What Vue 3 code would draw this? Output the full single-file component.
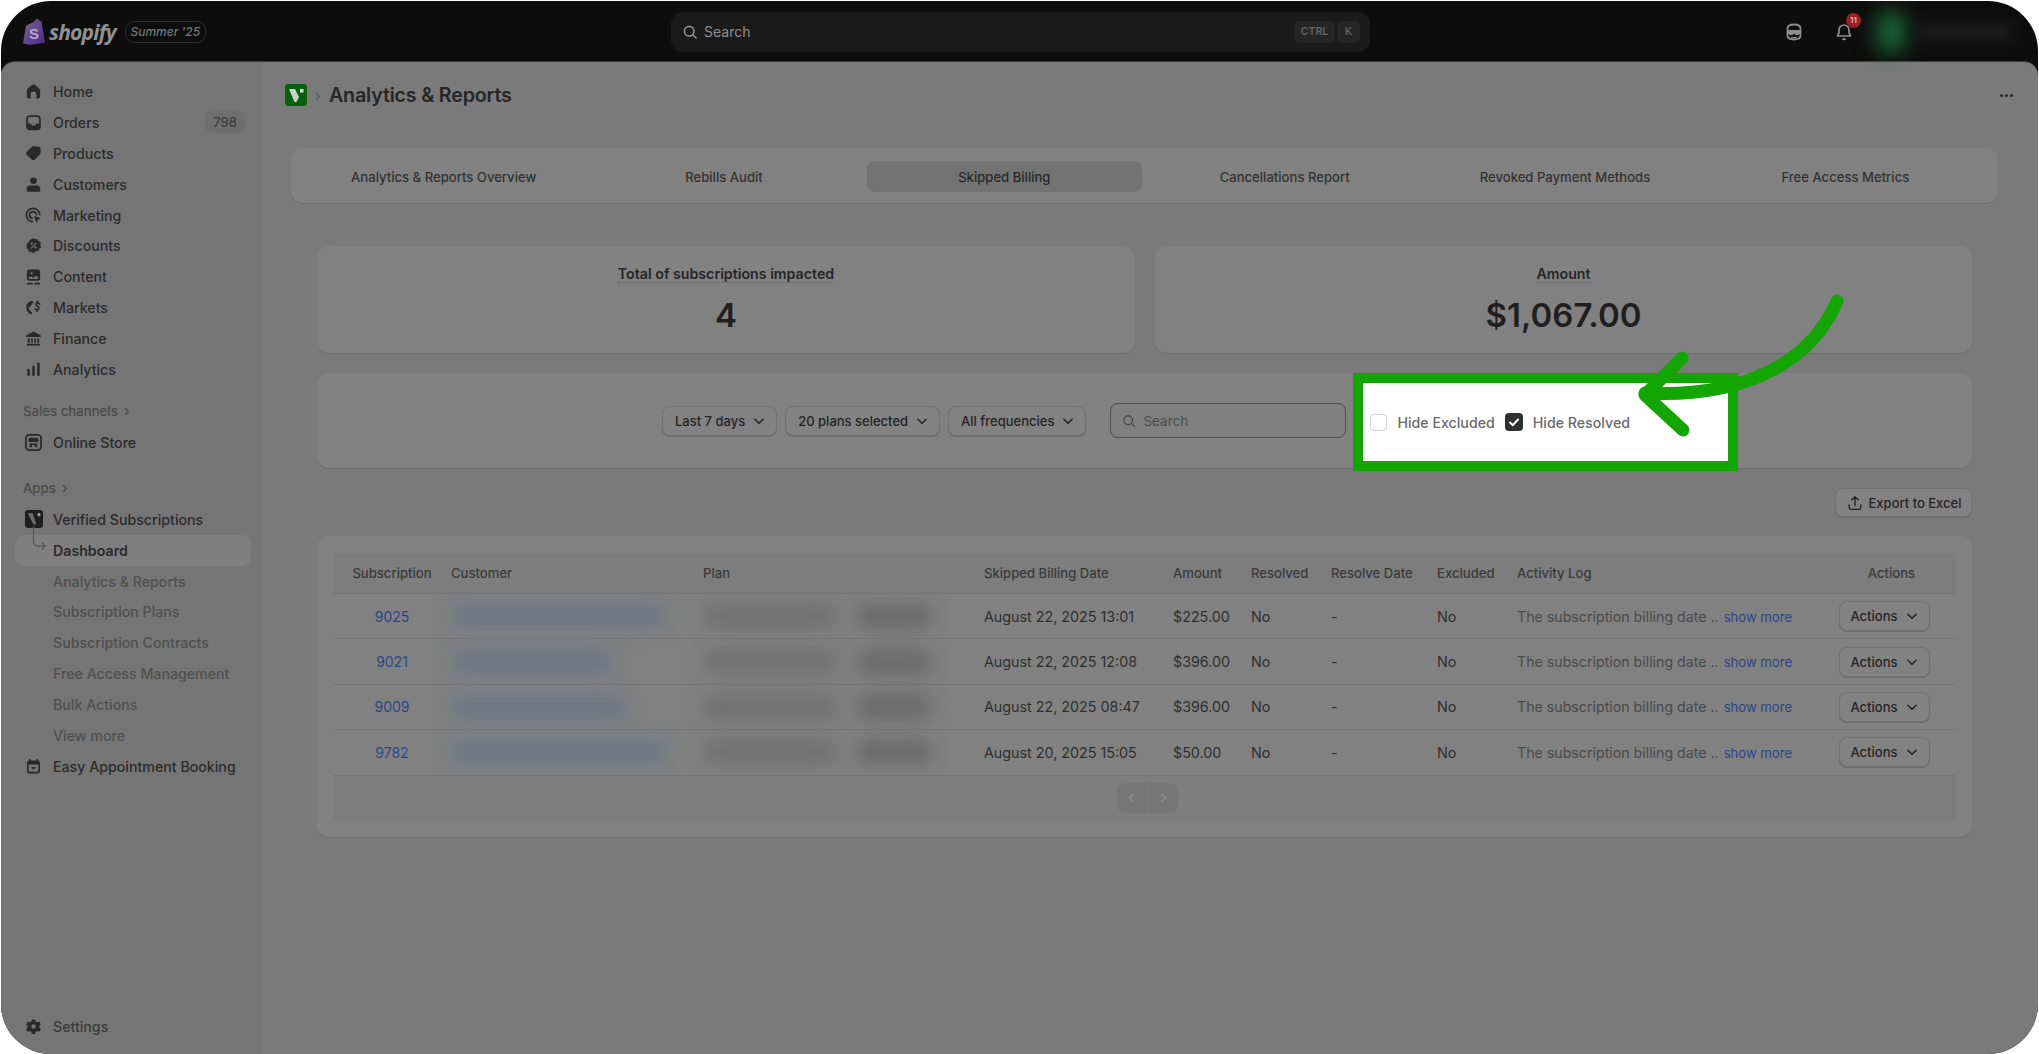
<template>
  <div class="screen">
    <div class="frame">
      <header class="topbar">
        <div class="brand">
          <svg class="bag" viewBox="0 0 22 26">
            <defs>
              <linearGradient id="bagfill" x1="0" y1="0" x2="1" y2="1">
                <stop offset="0" stop-color="#76688a" />
                <stop offset="1" stop-color="#4f2390" />
              </linearGradient>
            </defs>
            <path d="M3 6.500 11 3c.8-1.800 2-3 3.500-3 1 0 1.700.700 2.200 2l1.800.400L22 23.500 7 26 0 24.500Z" fill="url(#bagfill)" />
            <text x="6" y="20" class="bag-s">S</text>
          </svg>
          <span class="wordmark">shopify</span>
          <span class="season">Summer '25</span>
        </div>
        <div class="top-search">
          <svg class="ico16" viewBox="0 0 20 20"><circle cx="9" cy="9" r="6" fill="none" stroke="#909090" stroke-width="2" /><path d="m13.500 13.500 4 4" stroke="#909090" stroke-width="2" stroke-linecap="round" /></svg>
          <span class="top-search-text">Search</span>
          <span class="kbd ctrl">CTRL</span>
          <span class="kbd">K</span>
        </div>
        <div class="top-right">
          <svg class="top-ico" viewBox="0 0 20 20">
            <path d="M10 2.500c4.200 0 6.500 1.200 6.500 4v7c0 2.800-2.300 4-6.500 4s-6.500-1.200-6.500-4v-7c0-2.800 2.300-4 6.500-4Z" fill="none" stroke="#8e8e8e" stroke-width="1.800" />
            <path d="M3.500 8h13v3.500L14 13h-2.500L10 11.500 8.500 13H6l-2.500-1.500ZM7 15h6v1.200H7Z" fill="#8e8e8e" />
          </svg>
          <div class="bell">
            <svg class="top-ico" viewBox="0 0 20 20"><path d="M10 3a5 5 0 0 0-5 5v3l-1.500 3h13L15 11V8a5 5 0 0 0-5-5Z M8.500 16.500a1.700 1.700 0 0 0 3 0" fill="none" stroke="#8e8e8e" stroke-width="1.700" stroke-linejoin="round" /></svg>
            <span class="bell-badge">11</span>
          </div>
          <div class="avatar"></div>
          <div class="account"></div>
        </div>
      </header>

      <div class="content">
        <aside class="sidebar">
          <a v-for="item in primaryNav" :key="item.name" class="nav-row">
            <svg class="nav-ico" viewBox="0 0 20 20">
              <path v-for="d in icons[item.icon].f" :key="d" :d="d" fill="#292929" fill-rule="evenodd" />
              <path v-for="d in icons[item.icon].s" :key="d" :d="d" fill="none" stroke="#292929" stroke-width="1.800" stroke-linecap="round" />
            </svg>
            <span>{{ item.name }}</span>
            <span v-if="item.count" class="count">{{ item.count }}</span>
          </a>

          <div class="nav-label first">Sales channels <span class="label-arrow">›</span></div>
          <a class="nav-row">
            <svg class="nav-ico" viewBox="0 0 20 20">
              <rect x="2" y="2" width="16" height="16" rx="3.500" fill="none" stroke="#292929" stroke-width="1.800" />
              <path d="M5.500 5h9l1 3.500a1.500 1.500 0 0 1-2.800.600 2.200 2.200 0 0 1-2.700 0 2.200 2.200 0 0 1-2.700 0 1.500 1.500 0 0 1-2.800-.600ZM6 11h8v4h-2.500v-2.500h-3V15H6Z" fill="#292929" />
            </svg>
            <span>Online Store</span>
          </a>

          <div class="nav-label second">Apps <span class="label-arrow">›</span></div>
          <a class="nav-row">
            <svg class="nav-ico app" viewBox="0 0 20 20">
              <rect width="20" height="20" rx="3.500" fill="#1f1f1f" />
              <path d="M3 3.500h5.500l3 9 1 3.500H9.500Z" fill="#6a6a6a" />
              <path d="M14 3.500h3v3.500h-3Z" fill="#a0a0a0" />
            </svg>
            <span>Verified Subscriptions</span>
          </a>
          <a class="nav-row current">
            <svg class="tree" viewBox="0 0 16 30">
              <path d="M1.500 0v15q0 5 5 5h7m-3.500-3 3.500 3-3.500 3" fill="none" stroke="#5a5a5a" stroke-width="1.300" />
            </svg>
            <span>Dashboard</span>
          </a>
          <a v-for="name in appNav" :key="name" class="nav-row sub">
            <span>{{ name }}</span>
          </a>
          <a class="nav-row">
            <svg class="nav-ico" viewBox="0 0 20 20">
              <path d="M6 3v2M14 3v2" stroke="#292929" stroke-width="1.800" stroke-linecap="round" />
              <rect x="4" y="4.500" width="12" height="12" rx="2" fill="none" stroke="#292929" stroke-width="1.700" />
              <path d="M4.500 5h11v3h-11ZM7.500 10.500h5L10 13.500Z" fill="#292929" />
            </svg>
            <span>Easy Appointment Booking</span>
          </a>

          <a class="nav-row settings">
            <svg class="nav-ico" viewBox="0 0 20 20">
              <path fill-rule="evenodd" fill="#292929" d="M8.300 2.500h3.400l.500 2.200 1.700.900 2.200-.700 1.700 2.900-1.700 1.500v1.800l1.700 1.500-1.700 2.900-2.200-.700-1.700.900-.500 2.300H8.300l-.500-2.300-1.700-.900-2.200.700-1.700-2.900 1.700-1.500V9.300L2.200 7.800l1.700-2.900 2.200.700 1.700-.900ZM10 7.600a2.400 2.400 0 1 0 0 4.800 2.400 2.400 0 0 0 0-4.800Z" />
            </svg>
            <span>Settings</span>
          </a>
        </aside>

        <main class="main">
          <div class="title-row">
            <svg class="title-logo" viewBox="0 0 22 22">
              <rect width="22" height="22" rx="3.500" fill="#06600d" />
              <path d="M4 5h6l4 8-2.500 5H9.500Z" fill="#c8d4c8" />
              <path d="M15 5h3.500v3.500H15Z" fill="#d8e0d8" />
            </svg>
            <span class="crumb-arrow">›</span>
            <h1>Analytics &amp; Reports</h1>
            <span class="dots">
              <i></i><i></i><i></i>
            </span>
          </div>

          <nav class="tabs">
            <a v-for="t in tabs" :key="t" class="tab" :class="{ active: t === 'Skipped Billing' }">{{ t }}</a>
          </nav>

          <section class="body">
            <div class="stats">
              <div class="stat-card">
                <div class="stat-label">Total of subscriptions impacted</div>
                <div class="stat-value">4</div>
              </div>
              <div class="stat-card">
                <div class="stat-label">Amount</div>
                <div class="stat-value">$1,067.00</div>
              </div>
            </div>

            <div class="filters">
              <button v-for="f in filters" :key="f" class="btn">
                {{ f }}
                <svg class="caret" viewBox="0 0 12 12"><path d="m2.500 4.500 3.500 3.500 3.500-3.500" fill="none" stroke="#222" stroke-width="1.300" stroke-linecap="round" stroke-linejoin="round" /></svg>
              </button>
              <div class="filter-search">
                <svg class="ico16" viewBox="0 0 20 20"><circle cx="9" cy="9" r="5.500" fill="none" stroke="#444" stroke-width="1.600" /><path d="m13 13 4 4" stroke="#444" stroke-width="1.600" stroke-linecap="round" /></svg>
                <span>Search</span>
              </div>
              <div class="highlight">
                <span class="check"></span>
                <span class="check-label">Hide Excluded</span>
                <span class="check on">
                  <svg viewBox="0 0 18 18"><path d="m5 9.500 2.800 2.700L13 6.500" fill="none" stroke="#fff" stroke-width="2" stroke-linecap="round" stroke-linejoin="round" /></svg>
                </span>
                <span class="check-label">Hide Resolved</span>
              </div>
            </div>

            <div class="export-row">
              <button class="btn export">
                <svg class="export-ico" viewBox="0 0 20 20"><path d="M10 13V3.500m-3.500 3L10 3l3.500 3.500M3.500 12v3a2 2 0 0 0 2 2h9a2 2 0 0 0 2-2v-3" fill="none" stroke="#222" stroke-width="1.500" stroke-linecap="round" stroke-linejoin="round" /></svg>
                Export to Excel
              </button>
            </div>

            <div class="table-card">
              <table>
                <colgroup>
                  <col v-for="w in colWidths" :key="w.k" :style="{ width: w.v + 'px' }" />
                </colgroup>
                <thead>
                  <tr>
                    <th class="center">Subscription</th>
                    <th>Customer</th>
                    <th>Plan</th>
                    <th>Skipped Billing Date</th>
                    <th>Amount</th>
                    <th>Resolved</th>
                    <th>Resolve Date</th>
                    <th>Excluded</th>
                    <th>Activity Log</th>
                    <th class="center">Actions</th>
                  </tr>
                </thead>
                <tbody>
                  <tr v-for="row in rows" :key="row.id">
                    <td class="center"><a class="link id">{{ row.id }}</a></td>
                    <td><span class="smudge blue" :style="{ width: row.customer + 'px' }"></span></td>
                    <td>
                      <span class="smudge plan-a"></span>
                      <span class="smudge plan-b"></span>
                    </td>
                    <td>{{ row.date }}</td>
                    <td>{{ row.amount }}</td>
                    <td>No</td>
                    <td>-</td>
                    <td>No</td>
                    <td class="log">The subscription billing date .. <a class="link more">show more</a></td>
                    <td>
                      <button class="btn row-btn">
                        Actions
                        <svg class="caret" viewBox="0 0 12 12"><path d="m2.500 4.500 3.500 3.500 3.500-3.500" fill="none" stroke="#222" stroke-width="1.300" stroke-linecap="round" stroke-linejoin="round" /></svg>
                      </button>
                    </td>
                  </tr>
                </tbody>
              </table>
              <div class="pager">
                <span class="page-btn">
                  <svg viewBox="0 0 12 12"><path d="M7.500 2.500 4 6l3.500 3.500" fill="none" stroke="#8c8c8c" stroke-width="1.300" /></svg>
                </span>
                <span class="page-btn">
                  <svg viewBox="0 0 12 12"><path d="M4.500 2.500 8 6 4.500 9.500" fill="none" stroke="#8c8c8c" stroke-width="1.300" /></svg>
                </span>
              </div>
            </div>
          </section>
        </main>
      </div>
    </div>

    <svg class="arrow" viewBox="0 0 240 160">
      <path d="M217 11C190 75 120 108 25 103" fill="none" stroke="#13a500" stroke-width="13" stroke-linecap="round" />
      <path d="M62 68 25 105l38 35" fill="none" stroke="#13a500" stroke-width="13" stroke-linecap="round" stroke-linejoin="round" />
    </svg>
  </div>
</template>

<script setup>
const icons = {
  home: { f: ['M10 2.500c1 0 1.800.600 2.600 1.300l3 2.700c.900.800 1.400 1.700 1.400 3V15a2.500 2.500 0 0 1-2.500 2.500H13V13a3 3 0 0 0-6 0v4.500H5.500A2.500 2.500 0 0 1 3 15V9.500c0-1.300.500-2.200 1.400-3l3-2.700c.800-.700 1.600-1.300 2.600-1.300Z'], s: [] },
  orders: { f: ['M3 11h4c.400 1.500 1.500 2.300 3 2.300s2.600-.800 3-2.300h4v3.500a3 3 0 0 1-3 3H6a3 3 0 0 1-3-3Z'], s: ['M6 3.300h8a2.800 2.800 0 0 1 2.800 2.800v8.300a2.800 2.800 0 0 1-2.800 2.800H6a2.800 2.800 0 0 1-2.800-2.800V6.100A2.800 2.800 0 0 1 6 3.300Z'] },
  products: { f: ['M11.500 2.500H15a2.500 2.500 0 0 1 2.500 2.500v3.500c0 1.300-.500 2.300-1.300 3.200l-4.700 4.700c-1 1-2.600 1-3.500 0l-4.900-4.900c-1-1-1-2.500 0-3.500l4.700-4.700c.900-.900 2.300-1.300 3.700-1.300Z'], s: [] },
  customers: { f: ['M10 2.500a3.500 3.500 0 1 1 0 7 3.500 3.500 0 0 1 0-7Z', 'M5.500 11h9c1.500 0 2.500 1.500 2.500 3v3.500H3V14c0-1.500 1-3 2.500-3Z'], s: [] },
  marketing: { f: ['M10.500 10.500 18 13l-3.300 1.300L13.400 18Z'], s: ['M8.500 16.500a7 7 0 1 1 8-7.500', 'M8.500 12.800A3.500 3.500 0 1 1 12.800 9'] },
  discounts: { f: ['M10 2l2 1.500 2.500-.200 1 2.300 2.200 1.300-.500 2.500.800 2.400-2 1.500-.800 2.400-2.500.100L10 18l-2.200-1.200-2.500-.100-.800-2.400-2-1.500.800-2.400-.500-2.500 2.200-1.300 1-2.300L8 3.500ZM8 6.800a1.200 1.200 0 1 0 0 2.400 1.200 1.200 0 0 0 0-2.400Zm4 4a1.200 1.200 0 1 0 0 2.400 1.200 1.200 0 0 0 0-2.400Zm.300-4-5.400 5.800 1 .800 5.400-5.800Z'], s: [] },
  content: { f: ['M5.500 2.500h9A2.500 2.500 0 0 1 17 5v7a2.500 2.500 0 0 1-2.500 2.500h-9A2.500 2.500 0 0 1 3 12V5a2.500 2.500 0 0 1 2.500-2.500ZM5 10.500V12.500h10v-1l-2.500-2.500-2.500 2.500-2-1.500ZM8 5.500a1.200 1.200 0 1 0 0 2.400 1.200 1.200 0 0 0 0-2.400Z'], s: ['M4 17.500h4.500M11.500 17.500H16'] },
  markets: { f: ['M8.500 2.800c-3.500.500-6 3.500-6 7.200 0 3.800 2.800 7 6.500 7.300l-1-2.300-2.200-2L4.500 10 7 8.500l1.500-2.700 2-1Z'], s: ['M16.500 6.500c-.500-1-2-1.500-3-1-1.500.700-1.200 2.500.300 3 1.800.500 2.500 2 1.300 3.300-1 1-2.600.700-3.300-.300', 'M14 3.500v1.500M14 12v1.800'] },
  finance: { f: ['M10 2.500 17.500 6.500v2h-15v-2Z', 'M4 10h2v4.500H4ZM7.500 10h1.800v4.500H7.500ZM10.800 10h1.800v4.500h-1.800ZM14 10h2v4.500h-2Z', 'M3 15.500h14V17.500H3Z'], s: [] },
  analytics: { f: ['M3.500 10.500a1.300 1.300 0 0 1 2.600 0v5a1.300 1.300 0 0 1-2.600 0Z', 'M8.700 7a1.300 1.300 0 0 1 2.600 0v8.500a1.300 1.300 0 0 1-2.600 0Z', 'M13.900 3.800a1.300 1.300 0 0 1 2.600 0v11.700a1.300 1.300 0 0 1-2.600 0Z'], s: [] }
}

const primaryNav = [
  { name: 'Home', icon: 'home' },
  { name: 'Orders', icon: 'orders', count: 798 },
  { name: 'Products', icon: 'products' },
  { name: 'Customers', icon: 'customers' },
  { name: 'Marketing', icon: 'marketing' },
  { name: 'Discounts', icon: 'discounts' },
  { name: 'Content', icon: 'content' },
  { name: 'Markets', icon: 'markets' },
  { name: 'Finance', icon: 'finance' },
  { name: 'Analytics', icon: 'analytics' }
]

const appNav = [
  'Analytics & Reports',
  'Subscription Plans',
  'Subscription Contracts',
  'Free Access Management',
  'Bulk Actions',
  'View more'
]

const tabs = [
  'Analytics & Reports Overview',
  'Rebills Audit',
  'Skipped Billing',
  'Cancellations Report',
  'Revoked Payment Methods',
  'Free Access Metrics'
]

const filters = ['Last 7 days', '20 plans selected', 'All frequencies']

const colWidths = [118, 252, 281, 189, 78, 80, 106, 80, 310, 129].map((v, k) => ({ k, v }))

const rows = [
  { id: 9025, customer: 215, date: 'August 22, 2025 13:01', amount: '$225.00' },
  { id: 9021, customer: 162, date: 'August 22, 2025 12:08', amount: '$396.00' },
  { id: 9009, customer: 176, date: 'August 22, 2025 08:47', amount: '$396.00' },
  { id: 9782, customer: 215, date: 'August 20, 2025 15:05', amount: '$50.00' }
]
</script>

<style>
html,
body {
  margin: 0;
  background: #fff;
}
</style>

<style scoped>
.screen {
  position: relative;
  height: 100vh;
  box-sizing: border-box;
  padding: 1px 1px 0;
  background: #fff;
  font-family: Inter, "Noto Sans", sans-serif;
  font-size: 14.2px;
  color: #2b2b2b;
  overflow: hidden;
}

.frame {
  height: 100%;
  display: flex;
  flex-direction: column;
  background: #0d0d0d;
  border-radius: 50px;
  overflow: hidden;
}

/* top bar */
.topbar {
  height: 61px;
  flex: none;
  display: grid;
  grid-template-columns: 670px 699px 1fr;
  align-items: center;
}

.brand {
  display: flex;
  align-items: center;
  padding-left: 22px;
}

.bag {
  width: 22px;
  height: 26px;
}

.bag-s {
  font-family: "Liberation Sans", sans-serif;
  font-size: 15px;
  font-weight: 700;
  fill: #b4a6c4;
}

.wordmark {
  margin-left: 4px;
  font-family: "Open Sans", sans-serif;
  font-size: 21px;
  font-weight: 700;
  font-style: italic;
  letter-spacing: -0.8px;
  color: #919191;
}

.season {
  margin-left: 9px;
  height: 22px;
  width: 81px;
  box-sizing: border-box;
  border: 1px solid #2f2f2f;
  border-radius: 9px;
  display: flex;
  align-items: center;
  justify-content: center;
  font-size: 12px;
  font-weight: 500;
  font-style: italic;
  color: #74767a;
}

.top-search {
  height: 40px;
  display: flex;
  align-items: center;
  padding: 0 10px 0 11px;
  background: #1a1a1a;
  border-radius: 12px;
  color: #8e8e8e;
}

.ico16 {
  width: 16px;
  height: 16px;
  flex: none;
}

.top-search-text {
  flex: 1;
  margin-left: 6px;
  font-size: 14px;
}

.kbd {
  height: 22px;
  min-width: 23px;
  display: flex;
  align-items: center;
  justify-content: center;
  background: #252525;
  border-radius: 5px;
  font-size: 10.5px;
  font-weight: 600;
  color: #626262;
}

.kbd.ctrl {
  width: 41px;
  margin-right: 2px;
}

.top-right {
  display: flex;
  align-items: center;
  padding-left: 414px;
}

.top-ico {
  display: block;
  width: 20px;
  height: 20px;
}

.bell {
  position: relative;
  margin-left: 30px;
}

.bell-badge {
  position: absolute;
  top: -9px;
  right: -7px;
  width: 15px;
  height: 15px;
  border-radius: 50%;
  background: #a01e28;
  color: #d8b4b4;
  font-size: 8px;
  font-weight: 700;
  line-height: 15px;
  text-align: center;
}

.avatar {
  width: 24px;
  height: 38px;
  margin-left: 25px;
  background: #1c7a3e;
  filter: blur(11px);
}

.account {
  width: 92px;
  height: 16px;
  margin-left: 17px;
  background: #212121;
  filter: blur(8px);
}

/* page area */
.content {
  flex: 1;
  min-height: 0;
  display: flex;
  background: #7a7a7a;
  border-radius: 14px 14px 0 0;
  box-shadow: 0 -1px 0 #3d3d3d;
}

.sidebar {
  width: 262px;
  flex: none;
  box-sizing: border-box;
  display: flex;
  flex-direction: column;
  padding: 14px 0 12px;
  background: #757575;
  border-radius: 14px 0 0 0;
}

.nav-row {
  height: 30.9px;
  flex: none;
  display: flex;
  align-items: center;
  padding-left: 23px;
  padding-right: 18px;
  font-weight: 500;
  color: #2b2b2b;
}

.nav-ico {
  width: 19px;
  height: 19px;
  flex: none;
  margin-right: 10px;
}

.nav-ico.app {
  width: 18px;
  height: 18px;
  margin-left: 1px;
}

.count {
  margin-left: auto;
  width: 40px;
  height: 22px;
  border-radius: 7px;
  background: #6f6f6f;
  display: flex;
  align-items: center;
  justify-content: center;
  font-size: 13px;
  color: #3d3d3d;
}

.nav-label {
  height: 31px;
  flex: none;
  display: flex;
  align-items: center;
  gap: 6px;
  padding-left: 22px;
  font-size: 13.2px;
  font-weight: 500;
  color: #4b4b4b;
}

.nav-label.first {
  margin-top: 11px;
}

.nav-label.second {
  margin-top: 15px;
}

.label-arrow {
  font-size: 15px;
  line-height: 1;
  margin-top: -2px;
}

.nav-row.current {
  margin: 0 12px 0 14px;
  padding-left: 38px;
  position: relative;
  border-radius: 9px;
  background: #7f7f7f;
  font-weight: 600;
}

.tree {
  position: absolute;
  left: 17px;
  top: -9px;
  width: 16px;
  height: 30px;
}

.nav-row.sub {
  padding-left: 52px;
  color: #505050;
}

.nav-row.settings {
  margin-top: auto;
  color: #3a3a3a;
}

.main {
  flex: 1;
  min-width: 0;
}

.title-row {
  display: flex;
  align-items: center;
  height: 22px;
  margin: 22px 25px 0 22px;
}

.title-logo {
  width: 22px;
  height: 22px;
}

.crumb-arrow {
  width: 22px;
  text-align: center;
  color: #5f5f5f;
  font-size: 15px;
}

h1 {
  margin: 0;
  font-size: 19.7px;
  font-weight: 600;
  color: #262626;
  letter-spacing: -0.2px;
}

.dots {
  margin-left: auto;
  display: flex;
  gap: 2px;
}

.dots i {
  width: 3px;
  height: 3px;
  border-radius: 50%;
  background: #2b2b2b;
}

.tabs {
  margin: 42px 40px 0 28px;
  height: 55px;
  box-sizing: border-box;
  padding: 13px 15px 11px;
  display: grid;
  grid-template-columns: repeat(6, 1fr);
  gap: 5px;
  background: #818181;
  border-radius: 12px;
  box-shadow: 0 1px 0 #6d6d6d;
}

.tab {
  display: flex;
  align-items: center;
  justify-content: center;
  border-radius: 8px;
  font-size: 13.1px;
  font-weight: 500;
  color: #333;
}

.tab.active {
  background: #737373;
  color: #2a2a2a;
}

.body {
  margin: 43px 66px 0 54px;
}

.stats {
  display: grid;
  grid-template-columns: 818px 1fr;
  gap: 20px;
}

.stat-card {
  height: 107px;
  display: flex;
  flex-direction: column;
  align-items: center;
  background: #818181;
  border-radius: 12px;
  box-shadow: 0 1px 0 #6d6d6d;
}

.stat-label {
  margin-top: 19px;
  font-size: 14.2px;
  font-weight: 600;
  line-height: 17px;
  color: #262626;
  border-bottom: 1px dotted #5f5f5f;
}

.stat-value {
  margin-top: 12px;
  font-size: 33px;
  font-weight: 600;
  line-height: 40px;
  color: #1f1f1f;
}

.filters {
  height: 95px;
  margin-top: 20px;
  box-sizing: border-box;
  padding-left: 345px;
  display: flex;
  align-items: center;
  gap: 8px;
  background: #818181;
  border-radius: 12px;
  box-shadow: 0 1px 0 #6d6d6d;
}

.btn {
  height: 30px;
  box-sizing: border-box;
  display: inline-flex;
  align-items: center;
  justify-content: center;
  gap: 7px;
  padding: 0 10px 0 12px;
  border: 1px solid #727272;
  border-radius: 8px;
  background: #828282;
  box-shadow: 0 1px 0 #6a6a6a;
  font-family: inherit;
  font-size: 13px;
  font-weight: 500;
  color: #252525;
  white-space: nowrap;
}

.caret {
  width: 14px;
  height: 14px;
  flex: none;
}

.filter-search {
  width: 236px;
  height: 35px;
  box-sizing: border-box;
  margin-left: 16px;
  display: flex;
  align-items: center;
  gap: 6px;
  padding-left: 10px;
  border: 1px solid #4f4f4f;
  border-radius: 8px;
  background: #808080;
  font-size: 13.5px;
  color: #4d4d4d;
}

.highlight {
  width: 385px;
  height: 98px;
  box-sizing: border-box;
  margin: 0 0 -3px -1px;
  align-self: flex-start;
  padding-left: 7px;
  display: flex;
  align-items: center;
  gap: 10px;
  border: 10px solid #13a500;
  background: #fff;
}

.check {
  width: 17px;
  height: 17px;
  flex: none;
  box-sizing: border-box;
  border: 1.5px solid #cfcfcf;
  border-radius: 4px;
  background: #fff;
}

.check.on {
  border: 0;
  background: #303030;
  margin-left: 0;
  width: 18px;
  height: 18px;
}

.check.on svg {
  display: block;
}

.check-label {
  font-size: 14.2px;
  font-weight: 500;
  color: #6a6a6a;
}

.export-row {
  margin-top: 20px;
  display: flex;
  justify-content: flex-end;
}

.export {
  width: 137px;
  height: 29px;
  padding: 0;
  gap: 5px;
}

.export-ico {
  width: 18px;
  height: 18px;
  flex: none;
}

.table-card {
  margin-top: 19px;
  padding: 17px 16px 17px;
  background: #818181;
  border-radius: 12px;
  box-shadow: 0 1px 0 #6d6d6d;
}

table {
  width: 1623px;
  table-layout: fixed;
  border-collapse: collapse;
  font-size: 14.3px;
}

th {
  height: 40px;
  padding: 0;
  text-align: left;
  font-weight: 500;
  background: #7d7d7d;
  border-bottom: 1px solid #767676;
  color: #3a3a3a;
  font-size: 13.1px;
}

td {
  height: 44.4px;
  padding: 0;
  border-bottom: 1px solid #767676;
  color: #2f2f2f;
  white-space: nowrap;
}

.center {
  text-align: center;
}

.link {
  color: #2b4788;
}

.id {
  font-size: 14px;
}

.smudge {
  display: inline-block;
  height: 24px;
  border-radius: 8px;
  filter: blur(9px);
  vertical-align: middle;
}

.smudge.blue {
  background: #6d7686;
}

.smudge.plan-a {
  width: 134px;
  background: #707070;
}

.smudge.plan-b {
  width: 74px;
  margin-left: 20px;
  background: #696969;
}

.log {
  color: #4a4a4a;
  font-size: 14.2px;
}

.more {
  margin-left: 1px;
  font-size: 13.1px;
}

.row-btn {
  width: 91px;
  margin-left: 12px;
  padding: 0;
}

.pager {
  height: 44px;
  display: flex;
  align-items: center;
  justify-content: center;
  padding-left: 6px;
  background: #7d7d7d;
}

.page-btn {
  width: 30px;
  height: 30px;
  display: flex;
  align-items: center;
  justify-content: center;
  background: #767676;
  margin-right: 1px;
}

.page-btn:first-child {
  border-radius: 8px 0 0 8px;
}

.page-btn:last-child {
  border-radius: 0 8px 8px 0;
  margin-right: 0;
}

.page-btn svg {
  width: 14px;
  height: 14px;
}

/* annotation drawn over the page */
.arrow {
  position: absolute;
  left: 1620px;
  top: 290px;
  width: 240px;
  height: 160px;
  pointer-events: none;
}
</style>
